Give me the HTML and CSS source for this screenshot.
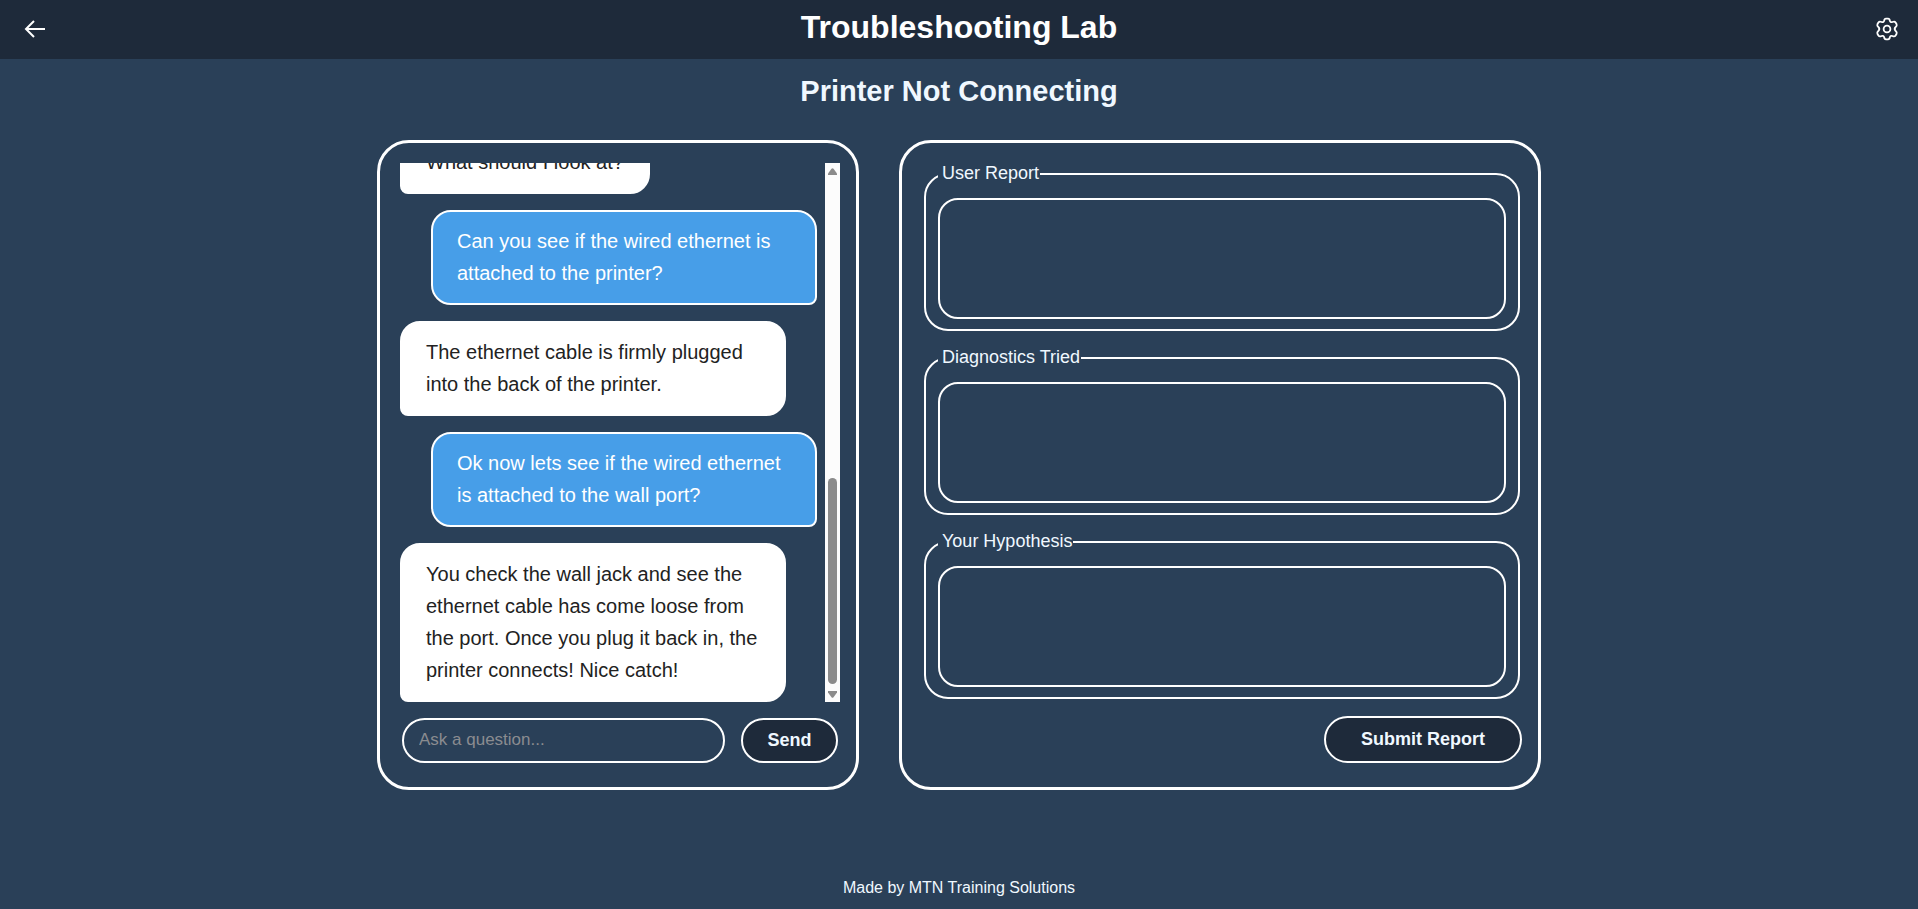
FILE: index.html
```html
<!DOCTYPE html>
<html lang="en">
<head>
<meta charset="utf-8">
<title>Troubleshooting Lab</title>
<link rel="stylesheet" href="styles.css">
</head>
<body>
<header class="topbar">
  <a class="icon-link" href="#" aria-label="Back">
    <svg viewBox="0 0 24 24" width="24" height="24" fill="none" stroke="currentColor" stroke-width="2"><path d="M22 12H3M11 4L3 12l8 8"/></svg>
  </a>
  <h1 class="topbar-title">Troubleshooting Lab</h1>
  <button class="icon-link" type="button" aria-label="Settings">
    <svg viewBox="0 0 24 24" width="24" height="24" fill="none" stroke="currentColor" stroke-width="1.8" stroke-linejoin="round"><path d="M9.200 3.600Q9.400 1.700 11 1.700h2Q14.600 1.700 14.800 3.600Q15.300 5.800 17.400 5Q19.600 4 20.600 5.500l1 1.700Q22.200 8.800 20.700 9.900Q18.600 12 20.700 14.100Q22.200 15.200 21.600 16.800l-1 1.700Q19.600 20 17.400 19Q15.300 18.200 14.800 20.400Q14.600 22.300 13 22.300h-2Q9.400 22.300 9.200 20.400Q8.700 18.200 6.600 19Q4.400 20 3.400 18.500l-1-1.700Q1.800 15.200 3.300 14.100Q5.400 12 3.300 9.900Q1.800 8.800 2.400 7.200l1-1.700Q4.400 4 6.600 5Q8.700 5.800 9.200 3.600z"/><circle cx="12" cy="12" r="3.400"/></svg>
  </button>
</header>
<main class="lab">
  <h2 class="scenario">Printer Not Connecting</h2>
  <div class="panels">
    <section class="panel chat" aria-label="Chat">
      <div class="chat-window">
        <div class="messages">
          <p class="bubble bot">What should I look at?</p>
          <p class="bubble user">Can you see if the wired ethernet is attached to the printer?</p>
          <p class="bubble bot">The ethernet cable is firmly plugged into the back of the printer.</p>
          <p class="bubble user">Ok now lets see if the wired ethernet is attached to the wall port?</p>
          <p class="bubble bot">You check the wall jack and see the ethernet cable has come loose from the port. Once you plug it back in, the printer connects! Nice catch!</p>
        </div>
        <div class="scrollbar" aria-hidden="true">
          <svg width="9" height="7" viewBox="0 0 9 7"><path d="M3.500 .8Q4.500-.4 5.500.8L9 5.500V7H0V5.500z" fill="#8b8b8b"/></svg>
          <span class="thumb"></span>
          <svg width="9" height="7" viewBox="0 0 9 7"><path d="M3.500 6.200Q4.500 7.400 5.500 6.200L9 1.500V0H0V1.500z" fill="#8b8b8b"/></svg>
        </div>
      </div>
      <form class="ask">
        <input class="ask-input" type="text" aria-label="Ask a question" placeholder="Ask a question...">
        <button class="btn btn-send" type="button">Send</button>
      </form>
    </section>
    <form class="panel report">
      <fieldset class="field">
        <legend><label for="user-report">User Report</label></legend>
        <textarea id="user-report"></textarea>
      </fieldset>
      <fieldset class="field">
        <legend><label for="diagnostics">Diagnostics Tried</label></legend>
        <textarea id="diagnostics"></textarea>
      </fieldset>
      <fieldset class="field">
        <legend><label for="hypothesis">Your Hypothesis</label></legend>
        <textarea id="hypothesis"></textarea>
      </fieldset>
      <button class="btn btn-submit" type="button">Submit Report</button>
    </form>
  </div>
</main>
<footer class="footer">Made by MTN Training Solutions</footer>
</body>
</html>
```
FILE: styles.css
```css
* {
  box-sizing: border-box;
}

body {
  margin: 0;
  min-height: 100vh;
  display: flex;
  flex-direction: column;
  background: #2a4058;
  color: #f0f8ff;
  font-family: Arial, "Liberation Sans", sans-serif;
  font-size: 16px;
}

.topbar {
  display: flex;
  align-items: center;
  justify-content: space-between;
  height: 59px;
  padding: 0 19px 2px;
  background: #1e2a3a;
  color: #fff;
}

.topbar-title {
  margin: 0;
  padding-bottom: 2px;
  font-size: 32px;
  line-height: 55px;
}

.icon-link {
  display: flex;
  padding: 0 0 0 4px;
  border: 0;
  background: none;
  color: inherit;
}

.lab {
  flex: 1;
  display: flex;
  flex-direction: column;
  align-items: center;
}

.scenario {
  margin: 16px 0 32px;
  font-size: 29px;
  line-height: 33px;
}

.panels {
  width: 100%;
  max-width: 1164px;
  display: grid;
  grid-template-columns: 482fr 642fr;
  gap: 40px;
}

.panel {
  display: flex;
  flex-direction: column;
  border: 3px solid #fff;
  border-radius: 32px;
}

.chat {
  padding: 20px 16px 24px 20px;
}

.report {
  padding: 20px 18px 24px 22px;
}

.chat-window {
  display: flex;
  height: 539px;
}

.messages {
  flex: 1;
  display: flex;
  flex-direction: column;
  justify-content: flex-end;
  gap: 16px;
  padding-right: 8px;
  overflow: hidden;
}

.bubble {
  flex: none;
  max-width: 386px;
  margin: 0;
  padding: 13px 24px 14px;
  border: 2px solid #fff;
  font-size: 20px;
  line-height: 32px;
}

.bot {
  align-self: flex-start;
  border-radius: 20px 20px 20px 8px;
  background: #fff;
  color: #222;
}

.user {
  align-self: flex-end;
  border-radius: 20px 20px 8px 20px;
  background: #479ee8;
  color: #fff;
}

.scrollbar {
  display: flex;
  flex-direction: column;
  align-items: center;
  width: 15px;
  padding: 5px 0 4px;
  background: #fcfcfc;
}

.thumb {
  width: 9px;
  height: 206px;
  margin: auto 0 7px;
  border-radius: 5px;
  background: #8b8b8b;
}

.ask {
  display: flex;
  gap: 16px;
  margin: 16px 2px 0;
}

.ask-input {
  flex: 1;
  min-width: 0;
  height: 45px;
  padding: 0 15px 2px;
  border: 2px solid #fff;
  border-radius: 24px;
  background: transparent;
  color: inherit;
  font: 17px Arial, "Liberation Sans", sans-serif;
}

.ask-input::placeholder {
  color: #8a8c90;
}

.btn {
  border: 2px solid #fff;
  border-radius: 24px;
  background: #1e2a3a;
  color: #f0f8ff;
  font: bold 18px Arial, "Liberation Sans", sans-serif;
}

.btn-send {
  width: 97px;
  height: 45px;
}

.btn-submit {
  align-self: flex-end;
  width: 198px;
  height: 47px;
  margin: 1px -2px 0 0;
}

.field {
  margin: 0 0 16px;
  padding: 14px 12px 10px;
  border: 2px solid #fff;
  border-radius: 24px;
}

.field legend {
  padding: 0 1px 0 4px;
  font-size: 18px;
  line-height: 21px;
}

.field textarea {
  display: block;
  width: 100%;
  height: 121px;
  border: 2px solid #fff;
  border-radius: 20px;
  background: transparent;
  color: inherit;
  resize: none;
}

.footer {
  padding: 0 0 11px;
  text-align: center;
  line-height: 20px;
}
```
